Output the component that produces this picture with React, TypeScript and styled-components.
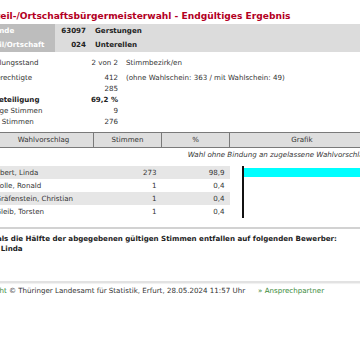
import * as React from "react"
import styled, { createGlobalStyle } from "styled-components"

const GlobalStyle = createGlobalStyle`
  html, body {
    margin: 0;
    padding: 0;
    background: #fff;
    overflow: hidden;
  }
  body {
    font-family: "DejaVu Sans", Verdana, sans-serif;
    font-size: 7.1px;
    color: #333;
  }
`

// the page is scrolled a little to the right, so its left edge is cut
const Page = styled.div`
  width: 420px;
  margin-left: -28px;
`

const Title = styled.h1`
  margin: 0;
  padding: 9px 0 1px 2px;
  font-size: 9.1px;
  line-height: 14px;
  font-weight: bold;
  color: #b3001f;
`

const Band = styled.div`
  display: grid;
  grid-template-columns: 83px 35px 1fr;
  grid-auto-rows: 14px;
  line-height: 14px;
  background: #dcdcdc;
  font-weight: bold;
  color: #222;
`
const BandLabel = styled.div`
  background: #bdbdbd;
  color: #fff;
  padding-left: 2px;
`
const BandCode = styled.div`
  text-align: right;
  padding-right: 4px;
`
const BandName = styled.div`
  padding-left: 5px;
`

const Info = styled.div`
  padding-top: 5px;
`
const InfoRow = styled.div<{ $bold?: boolean; $gap?: boolean }>`
  display: grid;
  grid-template-columns: 108px 40px auto;
  height: 11px;
  line-height: 11px;
  font-weight: ${p => (p.$bold ? "bold" : "normal")};
  color: ${p => (p.$bold ? "#222" : "#333")};
  margin-bottom: ${p => (p.$gap ? 4 : 0)}px;
`
const InfoLabel = styled.span`
  padding-left: 2px;
`
const InfoValue = styled.span`
  text-align: right;
  padding-right: 2px;
`
const InfoExtra = styled.span`
  padding-left: 6px;
  white-space: nowrap;
`

const ResultTable = styled.table`
  margin: 5px 0 0 21px;
  border-collapse: collapse;
  table-layout: fixed;
  width: 377px;
`
const HeadCell = styled.th<{ $w: number }>`
  width: ${p => p.$w}px;
  height: 14px;
  padding: 0;
  background: #dedede;
  border: 1px solid #7a7a7a;
  font-weight: normal;
  line-height: 14px;
  color: #333;
  text-align: center;
`
const NoteCell = styled.td`
  height: 18px;
  padding: 0 2px 0 0;
  vertical-align: top;
  line-height: 13px;
  text-align: right;
  font-style: italic;
  color: #333;
  white-space: nowrap;
`
const Cell = styled.td<{ $shade: boolean; $align?: string }>`
  height: 13px;
  padding: ${p => (p.$align === "right" ? "0 5px 0 0" : "0 0 0 2px")};
  line-height: 13px;
  background: ${p => (p.$shade ? "#e6e6e6" : "#fff")};
  text-align: ${p => p.$align || "left"};
  white-space: nowrap;
  color: #333;
`
const ChartCell = styled.td`
  padding: 0 0 0 12px;
  vertical-align: top;
`
const Chart = styled.div`
  border-left: 2px solid #111;
  height: 52px;
`
const BarRow = styled.div`
  height: 13px;
  padding-top: 2px;
  box-sizing: border-box;
`
const Bar = styled.div`
  height: 9px;
  background: #00ffff;
`

const Separator = styled.div`
  margin-top: 9px;
  height: 2px;
  background: #d2d2d2;
`
const Result = styled.p`
  margin: 5px 0 0;
  padding-left: 2px;
  font-weight: bold;
  line-height: 10px;
  color: #222;
`
const FooterLine = styled.div`
  margin-top: 27px;
  height: 2px;
  background: #e2e2e2;
  box-shadow: 0 1px 1px #f0f0f0;
`
const Footer = styled.div`
  display: flex;
  gap: 13px;
  margin-top: 2px;
  line-height: 12px;
  color: #333;
  white-space: nowrap;
`
const Link = styled.a`
  color: #3a8a3a;
  text-decoration: none;
`

const info = [
  { label: "Auszählungsstand", value: "2 von 2", extra: "Stimmbezirk/en", gap: true },
  { label: "Wahlberechtigte", value: "412", extra: "(ohne Wahlschein: 363 / mit Wahlschein: 49)" },
  { label: "Wähler", value: "285" },
  { label: "Wahlbeteiligung", value: "69,2 %", bold: true },
  { label: "Ungültige Stimmen", value: "9" },
  { label: "Gültige Stimmen", value: "276" },
]

const candidates = [
  { name: "Ebert, Linda", votes: 273, pct: 98.9 },
  { name: "Kolle, Ronald", votes: 1, pct: 0.4 },
  { name: "Gräfenstein, Christian", votes: 1, pct: 0.4 },
  { name: "Gleib, Torsten", votes: 1, pct: 0.4 },
]

const BAR_SCALE = 1.3

export default function App() {
  return (
    <Page>
      <GlobalStyle />
      <Title>Ortsteil-/Ortschaftsbürgermeisterwahl - Endgültiges Ergebnis</Title>
      <Band>
        <BandLabel>Gemeinde</BandLabel>
        <BandCode>63097</BandCode>
        <BandName>Gerstungen</BandName>
        <BandLabel>Ortsteil/Ortschaft</BandLabel>
        <BandCode>024</BandCode>
        <BandName>Unterellen</BandName>
      </Band>
      <Info>
        {info.map(row => (
          <InfoRow key={row.label} $bold={row.bold} $gap={row.gap}>
            <InfoLabel>{row.label}</InfoLabel>
            <InfoValue>{row.value}</InfoValue>
            <InfoExtra>{row.extra}</InfoExtra>
          </InfoRow>
        ))}
      </Info>
      <ResultTable>
        <thead>
          <tr>
            <HeadCell $w={99}>Wahlvorschlag</HeadCell>
            <HeadCell $w={67}>Stimmen</HeadCell>
            <HeadCell $w={67}>%</HeadCell>
            <HeadCell $w={144}>Grafik</HeadCell>
          </tr>
        </thead>
        <tbody>
          <tr>
            <NoteCell colSpan={4}>Wahl ohne Bindung an zugelassene Wahlvorschläge</NoteCell>
          </tr>
          {candidates.map((c, i) => (
            <tr key={c.name}>
              <Cell $shade={i % 2 === 0}>{c.name}</Cell>
              <Cell $shade={i % 2 === 0} $align="right">{c.votes}</Cell>
              <Cell $shade={i % 2 === 0} $align="right">{c.pct.toFixed(1).replace(".", ",")}</Cell>
              {i === 0 && (
                <ChartCell rowSpan={candidates.length}>
                  <Chart>
                    {candidates.map(b => (
                      <BarRow key={b.name}>
                        <Bar style={{ width: Math.floor(b.pct * BAR_SCALE) }} />
                      </BarRow>
                    ))}
                  </Chart>
                </ChartCell>
              )}
            </tr>
          ))}
        </tbody>
      </ResultTable>
      <Separator />
      <Result>
        Mehr als die Hälfte der abgegebenen gültigen Stimmen entfallen auf folgenden Bewerber:
        <br />
        Ebert, Linda
      </Result>
      <FooterLine />
      <Footer>
        <span>
          <Link href="#">Copyright</Link> © Thüringer Landesamt für Statistik, Erfurt, 28.05.2024 11:57 Uhr
        </span>
        <Link href="#">» Ansprechpartner</Link>
      </Footer>
    </Page>
  )
}
